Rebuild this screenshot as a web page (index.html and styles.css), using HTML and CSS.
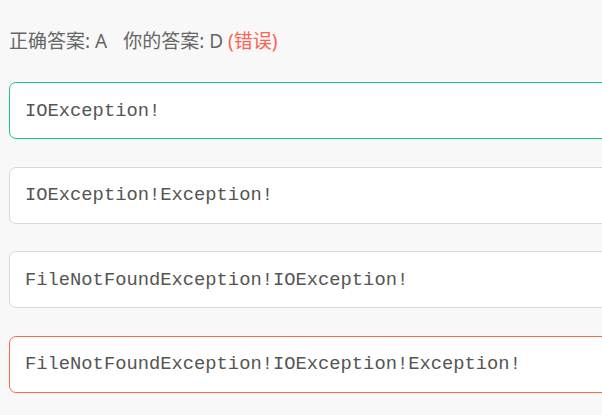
FILE: index.html
```html
<!DOCTYPE html>
<html lang="zh">
<head>
<meta charset="utf-8">
<link rel="stylesheet" href="styles.css">
</head>
<body>
<div class="result">
  <span class="label">正确答案: A</span>
  <span class="label">你的答案: D <span class="wrong">(错误)</span></span>
</div>
<div class="options">
  <div class="option correct">IOException!</div>
  <div class="option">IOException!Exception!</div>
  <div class="option">FileNotFoundException!IOException!</div>
  <div class="option chosen-wrong">FileNotFoundException!IOException!Exception!</div>
</div>
</body>
</html>
```
FILE: styles.css
```css
html, body {
  margin: 0;
  padding: 0;
  overflow: hidden;
  background: #f8f8f8;
}
body {
  padding: 29px 0 0 9px;
  width: 593px;
}
.result {
  display: flex;
  gap: 16px;
  font-family: "Noto Sans", "Noto Sans CJK SC", sans-serif;
  font-size: 19px;
  line-height: 24px;
  color: #666;
}
.wrong {
  color: #ff6250;
}
.options {
  margin-top: 29px;
  display: flex;
  flex-direction: column;
  gap: 27.67px;
}
.option {
  box-sizing: border-box;
  width: 620px;
  height: 57px;
  display: flex;
  align-items: center;
  padding-left: 15px;
  background: #fff;
  border: 1px solid #d9d9d9;
  border-radius: 7px;
  font-family: "Courier New", "Liberation Mono", monospace;
  font-size: 18.8px;
  color: #555;
}
.option.correct {
  border-color: #1fbe9a;
}
.option.chosen-wrong {
  border-color: #ff6a4d;
}
```
